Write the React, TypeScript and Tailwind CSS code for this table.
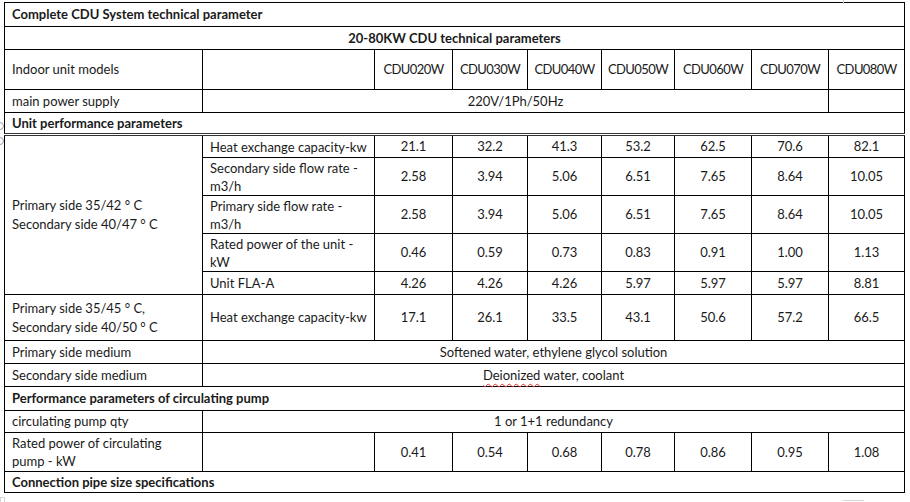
const models = ['CDU020W', 'CDU030W', 'CDU040W', 'CDU050W', 'CDU060W', 'CDU070W', 'CDU080W'];

const primaryRows = [
  { label: 'Heat exchange capacity-kw', h: 'h-[23px]', values: ['21.1', '32.2', '41.3', '53.2', '62.5', '70.6', '82.1'] },
  { label: 'Secondary side flow rate - m3/h', h: 'h-[38px]', values: ['2.58', '3.94', '5.06', '6.51', '7.65', '8.64', '10.05'] },
  { label: 'Primary side flow rate - m3/h', h: 'h-[38px]', values: ['2.58', '3.94', '5.06', '6.51', '7.65', '8.64', '10.05'] },
  { label: 'Rated power of the unit - kW', h: 'h-[38px]', values: ['0.46', '0.59', '0.73', '0.83', '0.91', '1.00', '1.13'] },
  { label: 'Unit FLA-A', h: 'h-[23px]', values: ['4.26', '4.26', '4.26', '5.97', '5.97', '5.97', '8.81'] },
];

const td = 'border border-black px-[7px] py-0 align-middle';
const num = 'border border-black px-0 py-0 align-middle text-center';

export default function App() {
  return (
    <div className="relative w-[910px] h-[502px] bg-white overflow-hidden pt-[2px] pl-[4px] text-[13px] leading-[19px] text-[#1a1a1a] font-['Lato',_'Liberation_Sans',_sans-serif]">
      {/* Word UI leftovers around the table */}
      <div className="absolute left-[843px] top-0 h-[4px] w-px bg-gray-300" />
      <div className="absolute left-[843px] top-[500px] h-px w-[21px] bg-gray-300" />
      <div className="absolute left-0 top-[497px] h-[6px] w-[5px] border border-gray-300" />
      <div className="absolute -left-[4px] top-[122px] h-[8px] w-[8px] rounded-full border border-gray-400" />
      <div className="absolute -left-[4px] top-[137px] h-[8px] w-[8px] rounded-full border border-gray-400" />

      <table className="table-fixed border-collapse w-[901px]">
        <colgroup>
          <col className="w-[198px]" />
          <col className="w-[172px]" />
          <col className="w-[78px]" />
          <col className="w-[75px]" />
          <col className="w-[74px]" />
          <col className="w-[73px]" />
          <col className="w-[77px]" />
          <col className="w-[77px]" />
          <col className="w-[76px]" />
        </colgroup>
        <tbody>
          <tr className="h-[24px]">
            <td colSpan={9} className={`${td} font-bold`}>Complete CDU System technical parameter</td>
          </tr>
          <tr className="h-[23px]">
            <td colSpan={9} className={`${td} font-bold text-center`}>20-80KW CDU technical parameters</td>
          </tr>
          <tr className="h-[40px]">
            <td className={td}>Indoor unit models</td>
            <td className={td}></td>
            {models.map((m) => (
              <td key={m} className={`${num} tracking-[-0.6px]`}>{m}</td>
            ))}
          </tr>
          <tr className="h-[23px]">
            <td className={td}>main power supply</td>
            <td colSpan={7} className={`${td} text-center`}>220V/1Ph/50Hz</td>
            <td className={td}></td>
          </tr>
          <tr className="h-[22px]">
            <td colSpan={9} className={`${td} font-bold border-double border-b-[3px] border-b-[#333]`}>
              Unit performance parameters
            </td>
          </tr>

          {primaryRows.map((row, i) => (
            <tr key={row.label} className={row.h}>
              {i === 0 && (
                <td rowSpan={5} className={td}>
                  Primary side 35/42 ° C
                  <br />
                  Secondary side 40/47 ° C
                </td>
              )}
              <td className={`${td} leading-[18px]`}>{row.label}</td>
              {row.values.map((v, j) => (
                <td key={j} className={num}>{v}</td>
              ))}
            </tr>
          ))}

          <tr className="h-[46px]">
            <td className={td}>
              Primary side 35/45 ° C,
              <br />
              Secondary side 40/50 ° C
            </td>
            <td className={td}>Heat exchange capacity-kw</td>
            {['17.1', '26.1', '33.5', '43.1', '50.6', '57.2', '66.5'].map((v, j) => (
              <td key={j} className={num}>{v}</td>
            ))}
          </tr>
          <tr className="h-[23px]">
            <td className={td}>Primary side medium</td>
            <td colSpan={8} className={`${td} text-center`}>Softened water, ethylene glycol solution</td>
          </tr>
          <tr className="h-[23px]">
            <td className={td}>Secondary side medium</td>
            <td colSpan={8} className={`${td} text-center`}>
              <span className="underline decoration-wavy decoration-[#e0302a] decoration-1 underline-offset-[3px]">Deionized</span> water, coolant
            </td>
          </tr>
          <tr className="h-[24px]">
            <td colSpan={9} className={`${td} font-bold`}>Performance parameters of circulating pump</td>
          </tr>
          <tr className="h-[22px]">
            <td className={td}>circulating pump qty</td>
            <td colSpan={8} className={`${td} text-center`}>1 or 1+1 redundancy</td>
          </tr>
          <tr className="h-[39px]">
            <td className={`${td} leading-[18px]`}>
              Rated power of circulating
              <br />
              pump - kW
            </td>
            <td className={td}></td>
            {['0.41', '0.54', '0.68', '0.78', '0.86', '0.95', '1.08'].map((v, j) => (
              <td key={j} className={num}>{v}</td>
            ))}
          </tr>
          <tr className="h-[21px]">
            <td colSpan={9} className={`${td} font-bold`}>Connection pipe size specifications</td>
          </tr>
        </tbody>
      </table>
    </div>
  );
}
